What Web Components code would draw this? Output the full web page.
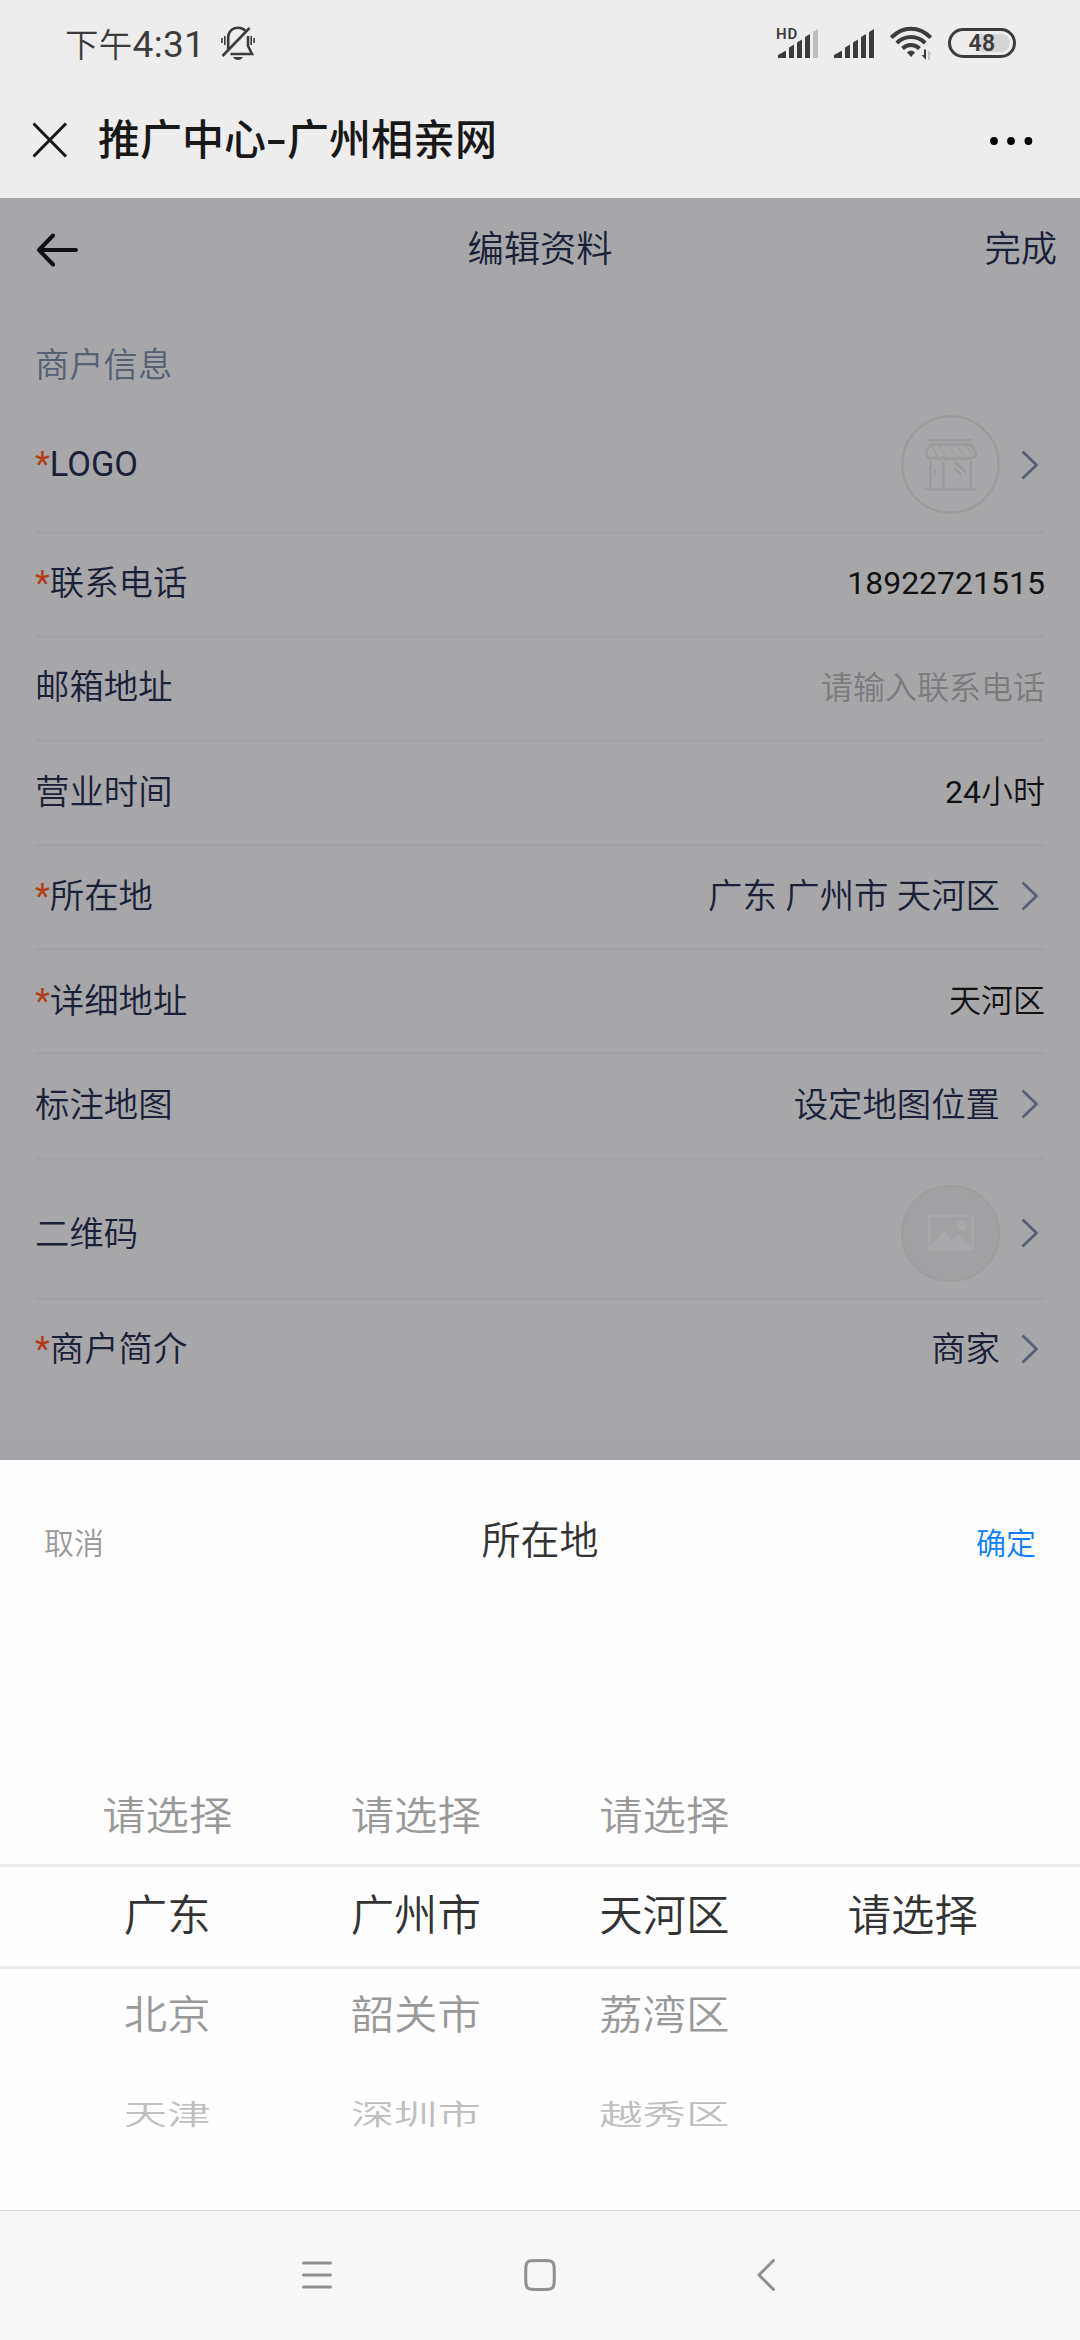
<!DOCTYPE html>
<html lang="zh-CN">
<head>
<meta charset="utf-8">
<title>推广中心-广州相亲网</title>
<style>
  body{
    margin: 0;
    width: 1080px;
    height: 2340px;
    overflow: hidden;
    display: flex;
    flex-direction: column;
    font-family: Roboto, "Noto Sans CJK SC", sans-serif;
    font-weight: 350;
    background: #fff;
  }
  .num{
    font-weight: 400;
  }
</style>
</head>
<body>
<status-bar></status-bar>
<title-bar>推广中心<span slot="dash">-</span><span slot="end">广州相亲网</span></title-bar>

<edit-page>
  <span slot="title">编辑资料</span>
  <span slot="action">完成</span>
  <span slot="section">商户信息</span>

  <form-row required arrow class="logo"><span slot="label" class="num">LOGO</span><shop-logo></shop-logo></form-row>
  <form-row required input><span slot="label">联系电话</span><span class="num">18922721515</span></form-row>
  <form-row input placeholder><span slot="label">邮箱地址</span>请输入联系电话</form-row>
  <form-row input><span slot="label">营业时间</span><span class="num">24</span>小时</form-row>
  <form-row required arrow><span slot="label">所在地</span>广东 广州市 天河区</form-row>
  <form-row required input><span slot="label">详细地址</span>天河区</form-row>
  <form-row arrow><span slot="label">标注地图</span>设定地图位置</form-row>
  <form-row arrow class="qr"><span slot="label">二维码</span><qr-image></qr-image></form-row>
  <form-row required arrow last><span slot="label">商户简介</span>商家</form-row>
</edit-page>

<area-picker>
  <span slot="cancel">取消</span>
  <span slot="title">所在地</span>
  <span slot="confirm">确定</span>
  <picker-column items="请选择,广东,北京,天津" selected="1"></picker-column>
  <picker-column items="请选择,广州市,韶关市,深圳市" selected="1"></picker-column>
  <picker-column items="请选择,天河区,荔湾区,越秀区" selected="1"></picker-column>
  <picker-column items="请选择" selected="0"></picker-column>
</area-picker>

<nav-bar></nav-bar>

<script>
function define(name, html){
  const template = document.createElement('template');
  template.innerHTML = html;
  window.customElements.define(name, class extends HTMLElement{
    constructor(){
      super();
      this.attachShadow({mode: 'open'});
      this.shadowRoot.appendChild(template.content.cloneNode(true));
    }
  });
}

define('status-bar', `
  <style>
  :host{
    display: flex;
    align-items: center;
    flex: none;
    box-sizing: border-box;
    height: 86px;
    padding: 0 64px 0 65px;
    background: #ededed;
    color: #3c3c3c;
    font-weight: 400;
  }
  .time{
    font-size: 37px;
    line-height: 50px;
    letter-spacing: 0.300px;
    padding-top: 4px;
    width: 156px;
    white-space: nowrap;
  }
  .time span{
    font-size: 33.500px;
    font-weight: 350;
  }
  .right{
    display: flex;
    align-items: center;
    margin-left: auto;
  }
  svg{
    display: block;
  }
  .signal{
    position: relative;
    margin-right: 16px;
  }
  .hd{
    position: absolute;
    left: -2px;
    top: -3px;
    font-size: 15px;
    line-height: 16px;
    font-weight: 600;
    letter-spacing: 0.800px;
  }
  .wifi{
    margin-right: 16px;
  }
  .battery{
    box-sizing: border-box;
    width: 68px;
    height: 30px;
    border: 3px solid #3c3c3c;
    border-radius: 15px;
    padding: 3px;
    display: flex;
  }
  .level{
    flex: 1;
    border-radius: 9px;
    background: linear-gradient(90deg, #ededed 45%, #d5d5d5 45%);
    font-size: 23px;
    line-height: 19px;
    font-weight: 600;
    text-align: center;
    letter-spacing: 0.400px;
  }
  </style>
  <div class="time"><span>下午</span>4:31</div>
  <svg width="34" height="34" viewBox="0 0 34 34" fill="none" stroke="#3c3c3c" stroke-width="2.600">
    <path d="M7.200 23V11.500C7.200 5.500 11.500 1.800 17 1.800C20 1.800 22.500 2.900 24.300 4.700M27 10V20L31 28H9.500"/>
    <path d="M1.500 30L28.500 2"/>
    <path d="M12 31H22C21 33 19 34 17 34S13 33 12 31Z" fill="#3c3c3c" stroke="none"/>
    <path d="M0.900 12V17M3.800 10V19M30.200 10V19M33.100 12V17" stroke-width="1.600"/>
  </svg>
  <div class="right">
    <div class="signal">
      <svg width="40" height="29" viewBox="0 0 40 29" fill="#3c3c3c">
        <path d="M0 29V26L8 21.500V29ZM11 29V18.500L16 15.500V29ZM19 29V13.500L24 10.500V29ZM27 29V8L32 5V29Z"/>
        <path d="M35 29V3L40 0V29Z" fill="#bdbdbd"/>
      </svg>
      <div class="hd">HD</div>
    </div>
    <div class="signal">
      <svg width="40" height="29" viewBox="0 0 40 29" fill="#3c3c3c">
        <path d="M0 29V26L8 21.500V29ZM11 29V18.500L16 15.500V29ZM19 29V13.500L24 10.500V29ZM27 29V8L32 5V29ZM35 29V3L40 0V29Z"/>
      </svg>
    </div>
    <svg class="wifi" width="42" height="34" viewBox="0 0 42 34" fill="none" stroke="#3c3c3c" stroke-width="4">
      <path d="M1.300 11.500C13 -0.300 29 -0.300 40.700 11.500M6.800 17C15 9 27 9 35.200 17M12.500 22.500C17.500 17.800 24.500 17.800 29.500 22.500"/>
      <path d="M17 26.500C19 24 23 24 25 26.500L21 31Z" fill="#3c3c3c" stroke="none"/>
      <path d="M36 23.500V34L31.500 29H34V23.500Z" fill="#3c3c3c" stroke="none"/>
      <path d="M38 34V24L42 28.500H40V34Z" fill="#c4c4c4" stroke="none"/>
    </svg>
    <div class="battery"><div class="level">48</div></div>
  </div>
`);

define('title-bar', `
  <style>
  :host{
    display: flex;
    align-items: center;
    flex: none;
    height: 112px;
    padding: 0 47px 2px 32px;
    box-sizing: border-box;
    background: #ededed;
    color: #181818;
    font-size: 42px;
    font-weight: 500;
    line-height: 60px;
    white-space: nowrap;
  }
  h1{
    display: flex;
    margin: 0 auto 0 30px;
    font: inherit;
  }
  .dash{
    width: 21px;
    text-align: center;
    transform: scaleX(1.500);
  }
  .close{
    margin-bottom: 2px;
  }
  </style>
  <svg class="close" width="36" height="36" viewBox="0 0 36 36" stroke="#181818" stroke-width="3">
    <path d="M1.500 1.500L34 34.500M34 1.500L1.500 34.500"/>
  </svg>
  <h1><slot></slot><div class="dash"><slot name="dash"></slot></div><slot name="end"></slot></h1>
  <svg width="44" height="10" viewBox="0 0 44 10">
    <circle cx="5" cy="5" r="3.900"/><circle cx="22" cy="5" r="3.900"/><circle cx="39.400" cy="5" r="3.900"/>
  </svg>
`);

// the page below is dimmed while the picker is open
define('edit-page', `
  <style>
  :host{
    display: block;
    flex: none;
    box-sizing: border-box;
    height: 1262px;
    border-bottom: 19px solid #a3a3a8;
    background: #a7a7a9;
    color: #1a2036;
  }
  header{
    display: grid;
    grid-template-columns: 1fr auto 1fr;
    align-items: center;
    height: 104px;
    padding: 0 23px;
    font-size: 36.300px;
    line-height: 50px;
  }
  header svg{
    margin-left: 12px;
  }
  .action{
    text-align: right;
  }
  .section{
    padding: 38px 35px 0;
    height: 53.500px;
    font-size: 34.300px;
    line-height: 50px;
    color: #556073;
  }
  main{
    padding: 0 35px;
  }
  </style>
  <header>
    <svg width="46" height="34" viewBox="0 0 46 34" fill="none" stroke="#0f1012" stroke-width="4" stroke-linecap="round" stroke-linejoin="round">
      <path d="M18 2.500L4 17L18 31.500M4 17H41"/>
    </svg>
    <div><slot name="title"></slot></div>
    <div class="action"><slot name="action"></slot></div>
  </header>
  <div class="section"><slot name="section"></slot></div>
  <main><slot></slot></main>
`);

define('form-row', `
  <style>
  :host{
    display: flex;
    align-items: center;
    box-sizing: border-box;
    height: 104.400px;
    padding-bottom: 3.500px;
    border-bottom: 3px solid #a2a2a5;
    font-size: 34.400px;
    line-height: 48px;
  }
  :host(.logo){
    height: 140px;
    padding: 5px 0 0;
  }
  :host(.qr){
    height: 140px;
    padding: 9.400px 0 0;
  }
  :host([last]){
    border-bottom-color: transparent;
  }
  .label, .value{
    padding-top: 1px;
  }
  :host(.logo) .label{
    padding: 0 0 2px;
  }
  :host(.logo) .value, :host(.qr) .value{
    padding: 0;
  }
  .star{
    display: none;
    color: #b23c17;
    font-weight: 400;
  }
  :host([required]) .star{
    display: inline;
  }
  .value{
    margin-left: auto;
  }
  :host([input]) .value{
    padding-top: 2px;
    font-size: 32px;
    color: #111;
  }
  :host([placeholder]) .value{
    color: #7b7b7d;
  }
  svg{
    display: none;
    margin: 0 6px 0 21px;
  }
  :host([arrow]) svg{
    display: block;
  }
  </style>
  <div class="label"><span class="star">*</span><slot name="label"></slot></div>
  <div class="value"><slot></slot></div>
  <svg width="18" height="30" viewBox="0 0 18 30" fill="none" stroke="#566074" stroke-width="2.800">
    <path d="M1.500 1.500L15.500 15L1.500 28.500"/>
  </svg>
`);

define('shop-logo', `
  <style>
  :host{
    display: block;
  }
  svg{
    display: block;
  }
  </style>
  <svg width="99" height="99" viewBox="0 0 99 99" fill="none" stroke="#9b9b9d" stroke-width="2.700" stroke-linecap="round" stroke-linejoin="round">
    <circle cx="49.500" cy="49.500" r="48.200" stroke-width="2.500"/>
    <path d="M29.500 25.300H69.700M29.700 29.500H69.800M29.700 29.500C27 33 25 35 25 38.500C25.500 43 31 44.500 33.500 42.500C37 45 40.500 44 42 42.500C45 44.500 47.500 44.500 50 43.500C53 44.500 56 44 58 42.500C61 44.500 64 44.500 66.500 42.500C70 44.500 75 42.500 75 38.500C74.500 35 72 33 69.800 29.500"/>
    <path d="M31.500 31.500L37 42M39 31.500L46 42M48 31.500L55 42M56.500 31.500L63.500 41.500M65 31.500L72 39" stroke-width="1.300"/>
    <path d="M29.400 47V74.300M42.400 47V74.300M69.700 47V74.300M25 74.300H74.300M33.700 55.500V59.500M55 47.500L64.500 57M54 54L59.500 59"/>
  </svg>
`);

define('qr-image', `
  <style>
  :host{
    display: flex;
    align-items: center;
    justify-content: center;
    box-sizing: border-box;
    width: 99px;
    height: 97px;
    border: 2.500px solid #9d9d9f;
    border-radius: 49px;
    background: #a1a1a3;
  }
  </style>
  <svg width="46" height="36" viewBox="0 0 46 36" fill="#a9a9ab">
    <rect x="1" y="1" width="43.500" height="34" rx="1.500" fill="none" stroke="#a9a9ab" stroke-width="2"/>
    <circle cx="33.700" cy="10.500" r="4.800"/>
    <path d="M2 34V31.500L16.700 16L24 25L31.500 19L43.500 32V34Z"/>
  </svg>
`);

define('area-picker', `
  <style>
  :host{
    display: block;
    flex: none;
    height: 750px;
    background: #fefefe;
    color: #333;
  }
  header{
    display: grid;
    grid-template-columns: 1fr auto 1fr;
    align-items: center;
    height: 160px;
    padding: 0 44px;
    font-size: 30px;
    line-height: 50px;
  }
  .title{
    padding-top: 2px;
    font-size: 39px;
  }
  .cancel, .confirm{
    padding-top: 7px;
  }
  .cancel{
    color: #999;
  }
  .confirm{
    color: #0a7fff;
    text-align: right;
  }
  .wheel{
    position: relative;
    display: flex;
    margin-top: 48px;
    height: 496px;
    padding: 0 43px;
  }
  /* frame around the selected row */
  .wheel::after{
    content: "";
    position: absolute;
    left: 0;
    right: 0;
    top: 196px;
    height: 99px;
    border: solid #ebebeb;
    border-width: 3px 0;
  }
  </style>
  <header>
    <div class="cancel"><slot name="cancel"></slot></div>
    <div class="title"><slot name="title"></slot></div>
    <div class="confirm"><slot name="confirm"></slot></div>
  </header>
  <div class="wheel"><slot></slot></div>
`);

class PickerColumn extends HTMLElement{

    constructor(){
        super();
        this.attachShadow({mode: 'open'});
    }

    connectedCallback(){
        const selected = Number(this.getAttribute('selected'));
        const items = this.getAttribute('items').split(',');
        this.shadowRoot.innerHTML = `
          <style>
          :host{
            display: block;
            flex: 1;
            box-sizing: border-box;
            padding-top: ${(2 - selected) * 99.4}px;
            font-size: 43.400px;
            text-align: center;
          }
          div{
            height: 99.400px;
            line-height: 99.400px;
          }
          .d1{
            color: #999;
            transform: scaleY(0.920);
          }
          .d2{
            color: #bfbfbf;
            transform: scaleY(0.650);
          }
          </style>
          ${items.map((item, i) => `<div class="d${Math.abs(i - selected)}">${item}</div>`).join('')}
        `;
    }

}

window.customElements.define('picker-column', PickerColumn);

define('nav-bar', `
  <style>
  :host{
    display: flex;
    align-items: center;
    flex: none;
    box-sizing: border-box;
    height: 130px;
    padding: 0 0 1px 300px;
    border-top: 1px solid #dcdcdc;
    background: #f7f7f7;
  }
  svg{
    display: block;
    fill: none;
    stroke: #8f8f8f;
    stroke-width: 3;
    stroke-linecap: round;
  }
  .home{
    margin: 0 200px 0 189px;
  }
  </style>
  <svg width="34" height="34" viewBox="0 0 34 34"><path d="M3.500 5H30.500M3.500 17H30.500M3.500 29H30.500"/></svg>
  <svg class="home" width="34" height="34" viewBox="0 0 34 34"><path d="M8 2.800Q17 2 26 2.800Q30.500 3.200 31 8Q31.600 17 31 26Q30.500 30.800 26 31.200Q17 32 8 31.200Q3.500 30.800 3 26Q2.400 17 3 8Q3.500 3.200 8 2.800Z"/></svg>
  <svg width="20" height="34" viewBox="0 0 20 34" stroke-linejoin="round"><path d="M16.500 2.500L2 17L16.500 31.500"/></svg>
`);
</script>
</body>
</html>
